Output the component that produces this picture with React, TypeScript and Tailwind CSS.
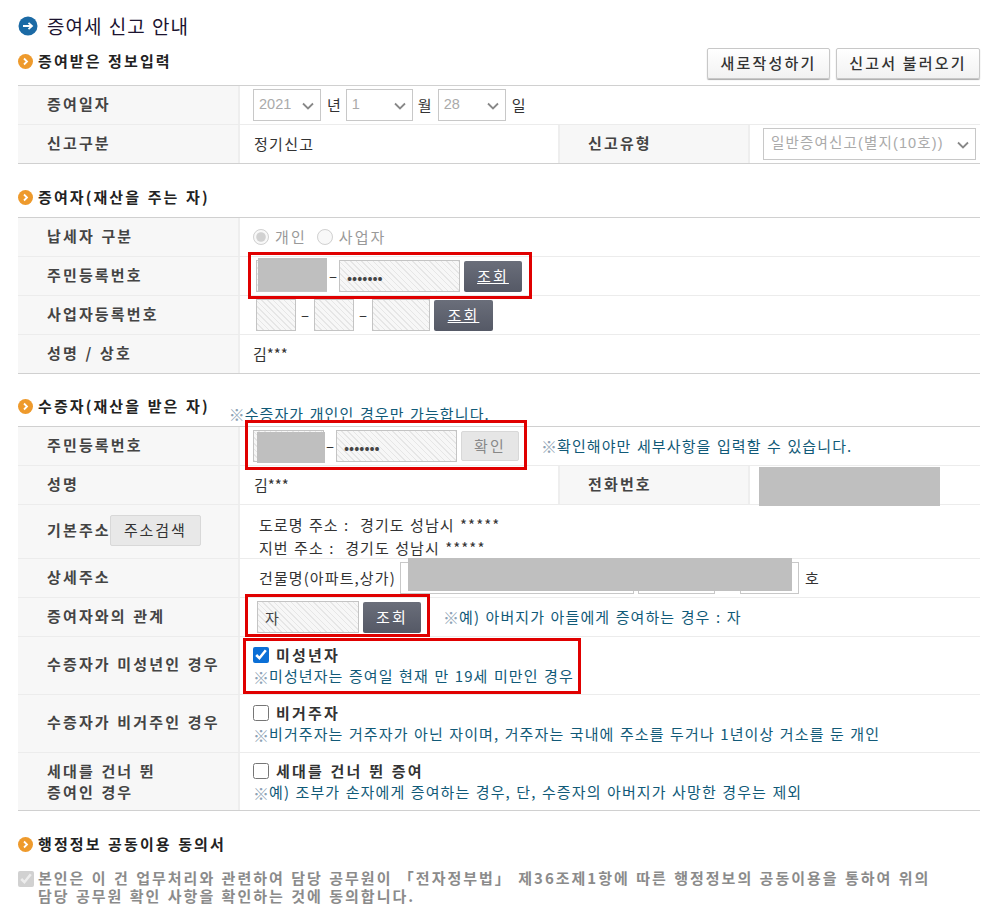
import type { ReactNode } from "react";

const hatch =
  "border border-[#c4c4c4] bg-[repeating-linear-gradient(45deg,#e6e6e6_0,#e6e6e6_1px,#f7f7f7_1px,#f7f7f7_4px)]";

function BlueBullet() {
  return (
    <svg width="20" height="20" viewBox="0 0 20 20" className="shrink-0">
      <circle cx="10" cy="10" r="9.5" fill="#1b6aa5" />
      <path d="M5 10h9M10.5 6.8 14 10l-3.5 3.2" fill="none" stroke="#fff" strokeWidth="1.8" />
    </svg>
  );
}

function OrangeBullet() {
  return (
    <svg width="15" height="15" viewBox="0 0 15 15" className="shrink-0">
      <circle cx="7.5" cy="7.5" r="7.5" fill="#ee9a2c" />
      <path d="M6 4.5 9 7.5 6 10.5" fill="none" stroke="#fff" strokeWidth="1.8" />
    </svg>
  );
}

function SectionTitle({ children, className = "" }: { children: ReactNode; className?: string }) {
  return (
    <div className={`flex h-[20px] items-center gap-[5px] text-[15px] font-bold tracking-[2.1px] text-[#222] ${className}`}>
      <OrangeBullet />
      <span className="whitespace-nowrap">{children}</span>
    </div>
  );
}

function Label({ children, className = "" }: { children: ReactNode; className?: string }) {
  return (
    <div className={`flex h-full shrink-0 items-center bg-[#f7f7f7] pb-[2px] text-[15px] font-bold tracking-[2.15px] text-[#444] ${className}`}>
      {children}
    </div>
  );
}

function Row({ label, h, last, children }: { label: ReactNode; h: string; last?: boolean; children: ReactNode }) {
  return (
    <div className={`flex ${h} border-b ${last ? "border-[#d0d0d0]" : "border-[#ececec]"}`}>
      <Label className="w-[222px] border-r-2 border-[#eeeeee] pl-[29px]">{label}</Label>
      <div className="flex min-w-0 flex-1 items-center">{children}</div>
    </div>
  );
}

function Table({ children }: { children: ReactNode }) {
  return <div className="border-t border-[#d0d0d0]">{children}</div>;
}

function Select({ value, className }: { value: string; className: string }) {
  return (
    <div className={`relative flex h-[32px] items-center border border-[#c8c8c8] font-['Liberation_Sans','Noto_Sans_CJK_KR',sans-serif] text-[14.5px] text-[#aaa] ${className}`}>
      {value}
      <svg width="12" height="8" viewBox="0 0 12 8" className="absolute right-[6px] top-[12px]">
        <path d="M1 1.5 6 6.5 11 1.5" fill="none" stroke="#888" strokeWidth="1.8" />
      </svg>
    </div>
  );
}

function HatchInput({ className, value, secret }: { className: string; value?: string; secret?: boolean }) {
  return (
    <input
      readOnly
      type={secret ? "password" : "text"}
      value={value ?? ""}
      className={`h-[32px] px-[7px] text-[15px] text-[#444] ${hatch} ${className}`}
    />
  );
}

function DarkButton({ label, className = "", underline }: { label: string; className?: string; underline?: boolean }) {
  return (
    <button className={`flex h-[31px] items-center justify-center rounded-[2px] bg-gradient-to-b from-[#6a6e7a] to-[#555966] text-[15px] tracking-[2.1px] text-white ${underline ? "underline" : ""} ${className}`}>
      {label}
    </button>
  );
}

function Note({ children, className = "" }: { children: ReactNode; className?: string }) {
  return (
    <div className={`flex items-center whitespace-nowrap text-[15px] tracking-[1.1px] text-[#115a78] ${className}`}>
      <span className="w-[16px] text-[16px] leading-none tracking-normal text-[#8ea3b5]">※</span>
      <span>{children}</span>
    </div>
  );
}

function CheckLine({ label, checked }: { label: string; checked?: boolean }) {
  return (
    <label className="mt-[2px] flex h-[20px] items-center gap-[7px] text-[15px] font-bold tracking-[2.2px] text-[#333]">
      <input type="checkbox" readOnly checked={!!checked} className="h-[16px] w-[16px] accent-[#0b6fd6]" />
      {label}
    </label>
  );
}

function RedBox({ className }: { className: string }) {
  return <div className={`pointer-events-none absolute border-[3px] border-[#e00000] ${className}`} />;
}

function Redact({ className }: { className: string }) {
  return <div className={`absolute bg-[#bfbfbf] ${className}`} />;
}

export default function App() {
  return (
    <div className="relative min-h-[920px] w-[988px] bg-white pl-[18px] pr-[8px] pt-[14px] font-['Noto_Sans_CJK_KR',sans-serif] text-[15px] text-[#333] [word-spacing:1px]">
      <div className="flex h-[24px] items-center gap-[9px] text-[19px] tracking-[1px] text-[#1c1430]">
        <BlueBullet />
        <span>증여세 신고 안내</span>
      </div>

      <div className="mt-[10px] flex h-[37px] items-start justify-between">
        <SectionTitle className="mt-[3px]">증여받은 정보입력</SectionTitle>
        <div className="flex gap-[6px] text-[15px] font-medium tracking-[2.2px] text-[#333]">
          <button className="h-[31px] w-[123px] rounded-[2px] border border-[#c8c8c8] bg-gradient-to-b from-white to-[#f2f2f2] shadow-[0_1px_1px_#aaa]">새로작성하기</button>
          <button className="h-[31px] w-[144px] rounded-[2px] border border-[#c8c8c8] bg-gradient-to-b from-white to-[#f2f2f2] shadow-[0_1px_1px_#aaa]">신고서 불러오기</button>
        </div>
      </div>

      <Table>
        <Row h="h-[39px]" label="증여일자">
          <div className="flex items-center pl-[13px]">
            <Select value="2021" className="w-[68px] pl-[5px]" />
            <span className="ml-[6px] mr-[5px]">년</span>
            <Select value="1" className="w-[67px] pl-[5px]" />
            <span className="ml-[5px] mr-[6px]">월</span>
            <Select value="28" className="w-[68px] pl-[5px]" />
            <span className="ml-[6px]">일</span>
          </div>
        </Row>
        <Row h="h-[39px]" last label="신고구분">
          <div className="w-[318px] pl-[14px] tracking-[1.3px]">정기신고</div>
          <Label className="w-[192px] border-x-2 border-[#eeeeee] pl-[28px]">신고유형</Label>
          <div className="pl-[13px]">
            <Select value="일반증여신고(별지(10호))" className="w-[213px] pl-[7px] tracking-[1.15px]" />
          </div>
        </Row>
      </Table>

      <SectionTitle className="mt-[23px] mb-[10px]">증여자(재산을 주는 자)</SectionTitle>
      <Table>
        <Row h="h-[39px]" label="납세자 구분">
          <div className="flex items-center gap-[6px] pl-[13px] tracking-[2.1px] text-[#999]">
            <input type="radio" disabled checked readOnly className="h-[16px] w-[16px]" />
            <span>개인</span>
            <input type="radio" disabled readOnly className="ml-[4px] h-[16px] w-[16px]" />
            <span>사업자</span>
          </div>
        </Row>
        <Row h="h-[39px]" label="주민등록번호">
          <div className="flex items-center pl-[16px]">
            <HatchInput className="w-[71px]" />
            <span className="w-[12px] text-center">–</span>
            <HatchInput className="w-[121px]" secret value="1234567" />
            <DarkButton underline label="조회" className="ml-[4px] w-[58px]" />
          </div>
        </Row>
        <Row h="h-[39px]" label="사업자등록번호">
          <div className="flex items-center pl-[16px]">
            <HatchInput className="w-[40px]" />
            <span className="w-[18px] text-center">–</span>
            <HatchInput className="w-[40px]" />
            <span className="w-[18px] text-center">–</span>
            <HatchInput className="w-[58px]" />
            <DarkButton underline label="조회" className="ml-[4px] w-[59px]" />
          </div>
        </Row>
        <Row h="h-[39px]" last label="성명 / 상호">
          <div className="pl-[13px]">김***</div>
        </Row>
      </Table>

      <div className="mt-[22px] mb-[10px] flex h-[20px] items-start">
        <SectionTitle>수증자(재산을 받은 자)</SectionTitle>
        <Note className="ml-[19px] mt-[7px]">수증자가 개인인 경우만 가능합니다.</Note>
      </div>
      <Table>
        <Row h="h-[39px]" label="주민등록번호">
          <div className="flex items-center pl-[13px]">
            <HatchInput className="w-[71px]" />
            <span className="w-[12px] text-center">–</span>
            <HatchInput className="w-[121px]" secret value="1234567" />
            <button className="ml-[4px] h-[30px] w-[58px] rounded-[2px] border border-[#d8d8d8] bg-[#e6e6e6] tracking-[2.1px] text-[#888]">확인</button>
            <Note className="ml-[22px]">확인해야만 세부사항을 입력할 수 있습니다.</Note>
          </div>
        </Row>
        <Row h="h-[39px]" label="성명">
          <div className="w-[318px] pl-[14px]">김***</div>
          <Label className="w-[192px] border-x-2 border-[#eeeeee] pl-[28px]">전화번호</Label>
        </Row>
        <Row
          h="h-[54px]"
          label={
            <span className="flex items-center">
              기본주소
              <button className="-ml-[1px] h-[31px] w-[91px] rounded-[2px] border border-[#d8d8d8] bg-[#e8e8e8] font-normal tracking-[1.9px] text-[#333]">주소검색</button>
            </span>
          }
        >
          <div className="pl-[19px] pt-[9px] leading-[23px] tracking-[1.05px]">
            <div>도로명 주소 : &nbsp;경기도 성남시 *****</div>
            <div>지번 주소 : &nbsp;경기도 성남시 *****</div>
          </div>
        </Row>
        <Row h="h-[39px]" label="상세주소">
          <div className="flex items-center pl-[19px] tracking-[1.1px]">
            <span className="w-[141px] whitespace-nowrap">건물명(아파트,상가)</span>
            <input readOnly className="h-[32px] w-[234px] border border-[#c8c8c8]" />
            <input readOnly className="ml-[4px] h-[32px] w-[77px] border border-[#c8c8c8]" />
            <input readOnly className="ml-[25px] h-[32px] w-[59px] border border-[#c8c8c8]" />
            <span className="ml-[6px]">호</span>
          </div>
        </Row>
        <Row h="h-[39px]" label="증여자와의 관계">
          <div className="flex items-center pl-[17px]">
            <HatchInput className="w-[102px]" value="자" />
            <DarkButton label="조회" className="ml-[4px] w-[58px]" />
            <Note className="ml-[22px]">예) 아버지가 아들에게 증여하는 경우 : 자</Note>
          </div>
        </Row>
        <Row h="h-[58px]" label="수증자가 미성년인 경우">
          <div className="flex flex-col pl-[13px]">
            <CheckLine checked label="미성년자" />
            <Note>미성년자는 증여일 현재 만 19세 미만인 경우</Note>
          </div>
        </Row>
        <Row h="h-[58px]" label="수증자가 비거주인 경우">
          <div className="flex flex-col pl-[13px]">
            <CheckLine label="비거주자" />
            <Note>비거주자는 거주자가 아닌 자이며, 거주자는 국내에 주소를 두거나 1년이상 거소를 둔 개인</Note>
          </div>
        </Row>
        <Row
          h="h-[58px]"
          last
          label={
            <span className="leading-[21px]">
              세대를 건너 뛴
              <br />
              증여인 경우
            </span>
          }
        >
          <div className="flex flex-col pl-[13px]">
            <CheckLine label="세대를 건너 뛴 증여" />
            <Note>예) 조부가 손자에게 증여하는 경우, 단, 수증자의 아버지가 사망한 경우는 제외</Note>
          </div>
        </Row>
      </Table>

      <SectionTitle className="mt-[23px]">행정정보 공동이용 동의서</SectionTitle>
      <div className="mt-[15px] flex gap-[4px] text-[15px] font-bold leading-[18px] tracking-[2px] text-[#8b8b8b]">
        <input type="checkbox" disabled checked readOnly className="mt-[2px] h-[16px] w-[16px] shrink-0" />
        <div className="whitespace-nowrap">
          본인은 이 건 업무처리와 관련하여 담당 공무원이 「전자정부법」 제36조제1항에 따른 행정정보의 공동이용을 통하여 위의
          <br />
          담당 공무원 확인 사항을 확인하는 것에 동의합니다.
        </div>
      </div>

      <Redact className="left-[258px] top-[258px] h-[33px] w-[69px]" />
      <Redact className="left-[257px] top-[432px] h-[31px] w-[68px]" />
      <Redact className="left-[759px] top-[467px] h-[39px] w-[181px]" />
      <Redact className="left-[408px] top-[558px] h-[33px] w-[384px]" />

      <RedBox className="left-[248px] top-[252px] h-[47px] w-[284px]" />
      <RedBox className="left-[245px] top-[420px] h-[50px] w-[282px]" />
      <RedBox className="left-[245px] top-[594px] h-[43px] w-[185px]" />
      <RedBox className="left-[243px] top-[638px] h-[56px] w-[338px]" />
    </div>
  );
}
